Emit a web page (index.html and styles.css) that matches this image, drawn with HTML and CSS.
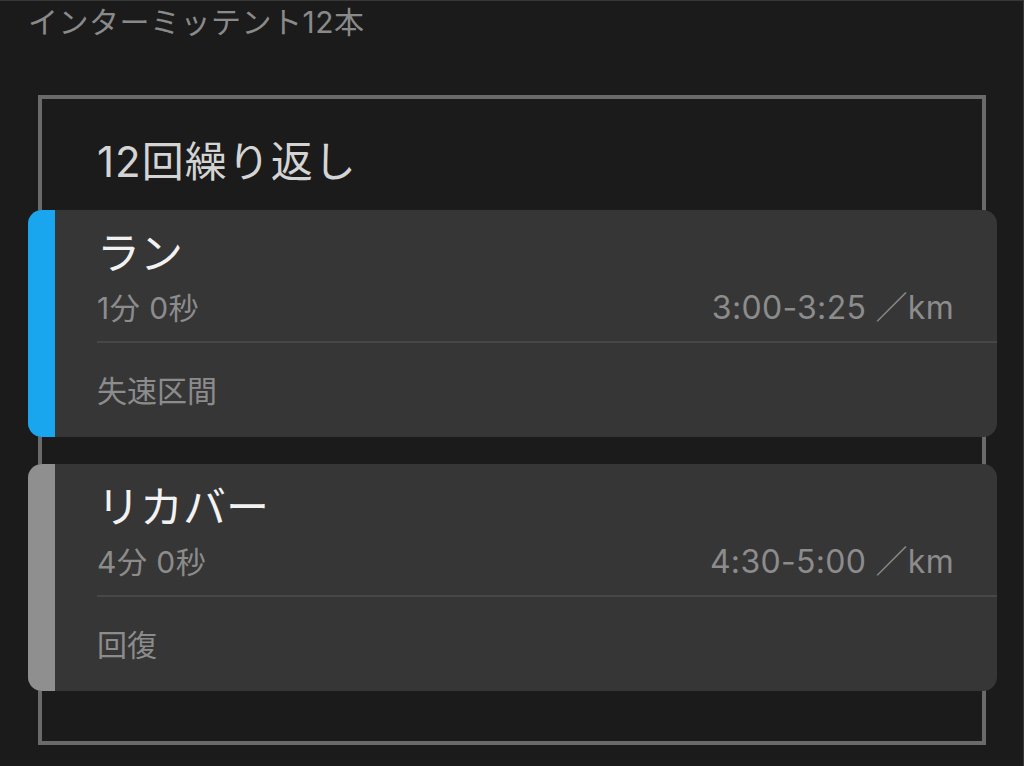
FILE: index.html
```html
<!DOCTYPE html>
<html lang="ja">
<head>
<meta charset="utf-8">
<title>インターミッテント12本</title>
<link rel="stylesheet" href="styles.css">
</head>
<body>
<div class="screen">
  <div class="page-title">インターミッテント12本</div>
  <section class="repeat-box">
    <h2 class="repeat-title">12回繰り返し</h2>
    <div class="step step-run">
      <div class="stripe"></div>
      <div class="step-body">
        <div class="step-top">
          <div class="step-name">ラン</div>
          <div class="step-row">
            <span class="step-dur">1分 0秒</span>
            <span class="step-pace">3:00-3:25 ／km</span>
          </div>
        </div>
        <div class="divider"></div>
        <div class="step-note">失速区間</div>
      </div>
    </div>
    <div class="step step-recover">
      <div class="stripe"></div>
      <div class="step-body">
        <div class="step-top">
          <div class="step-name">リカバー</div>
          <div class="step-row">
            <span class="step-dur">4分 0秒</span>
            <span class="step-pace">4:30-5:00 ／km</span>
          </div>
        </div>
        <div class="divider"></div>
        <div class="step-note">回復</div>
      </div>
    </div>
  </section>
</div>
</body>
</html>
```

FILE: styles.css
```css
html, body {
  margin: 0;
  padding: 0;
  background: #1b1b1b;
}

body {
  font-family: "Inter", "Noto Sans CJK JP", sans-serif;
  width: 1024px;
  height: 766px;
  overflow: hidden;
}

.screen {
  box-sizing: border-box;
  width: 1024px;
  height: 766px;
  border-top: 1px solid #383838;
  border-right: 1px solid #383838;
  background: #1b1b1b;
}

.page-title {
  height: 43px;
  line-height: 42px;
  padding-left: 28px;
  font-size: 30px;
  letter-spacing: 0.5px;
  color: #8a8a8a;
  white-space: nowrap;
}

.repeat-box {
  box-sizing: border-box;
  margin: 51px 0 0 38px;
  width: 948px;
  border: 4px solid #6a6a6a;
  padding: 35px 0 50px 0;
  display: flex;
  flex-direction: column;
  gap: 27px;
}

.repeat-title {
  margin: 0 0 -7px 0;
  padding-left: 55px;
  height: 56px;
  line-height: 56px;
  font-size: 42px;
  letter-spacing: 1px;
  font-weight: normal;
  color: #d4d4d4;
  white-space: nowrap;
}

.step {
  margin: 0 -15px 0 -14px;
  display: flex;
  background: #363636;
  border-radius: 14px;
  overflow: hidden;
}

.stripe {
  flex: 0 0 27px;
}

.step-run .stripe {
  background: #19a6ee;
}

.step-recover .stripe {
  background: #8f8f8f;
}

.step-body {
  flex: 1;
  padding-left: 42px;
  padding-top: 16px;
}

.step-top {
  padding-right: 43px;
  padding-bottom: 13px;
}

.step-name {
  height: 54px;
  line-height: 54px;
  font-size: 43px;
  color: #f2f2f2;
  white-space: nowrap;
}

.step-row {
  margin-top: 8px;
  height: 40px;
  line-height: 40px;
  display: flex;
  justify-content: space-between;
  align-items: baseline;
  font-size: 30px;
  color: #8c8c8c;
  white-space: nowrap;
}

.step-dur {
  letter-spacing: 0.5px;
}

.step-pace {
  font-size: 32px;
  letter-spacing: 0.3px;
}

.divider {
  height: 2px;
  background: #474747;
}

.step-note {
  padding: 28px 0 26px 0;
  height: 40px;
  line-height: 40px;
  font-size: 30px;
  color: #8c8c8c;
}
```
